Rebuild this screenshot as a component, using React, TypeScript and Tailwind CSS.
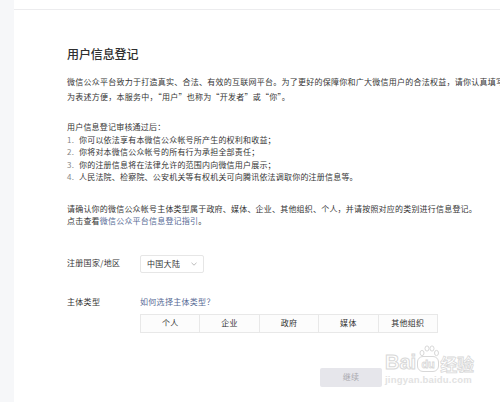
const font = "font-['Noto_Sans_CJK_SC','Noto_Sans',sans-serif]";

const rules = [
    "你可以依法享有本微信公众帐号所产生的权利和收益；",
    "你将对本微信公众帐号的所有行为承担全部责任；",
    "你的注册信息将在法律允许的范围内向微信用户展示；",
    "人民法院、检察院、公安机关等有权机关可向腾讯依法调取你的注册信息等。",
];

const types = ["个人", "企业", "政府", "媒体", "其他组织"];

function Watermark() {
    return (
        <div className="absolute left-[385px] top-[352px] flex flex-col items-start text-[#dcdcdc] select-none">
            <div className="flex items-end leading-none">
                <span className="font-['Liberation_Sans',sans-serif] text-[20px] font-bold text-transparent [-webkit-text-stroke:1px_#d8d8d8]">
                    Bai
                </span>
                <span className="relative mx-[1px] flex h-[16px] w-[22px] items-center justify-center rounded-[6px] border border-[#d8d8d8] font-['Liberation_Sans',sans-serif] text-[11px] font-bold text-transparent [-webkit-text-stroke:0.8px_#d8d8d8]">
                    du
                    <svg className="absolute -top-[12px] left-[1px]" width="20" height="12" viewBox="0 0 20 12" fill="none" stroke="#d8d8d8" strokeWidth="1">
                        <ellipse cx="3" cy="8" rx="2" ry="2.6" />
                        <ellipse cx="8" cy="3.5" rx="2" ry="2.6" />
                        <ellipse cx="13" cy="3.5" rx="2" ry="2.6" />
                        <ellipse cx="17.5" cy="8" rx="2" ry="2.6" />
                    </svg>
                </span>
                <span className={`${font} text-[17px] font-bold text-transparent [-webkit-text-stroke:0.8px_#d8d8d8]`}>经验</span>
            </div>
            <span className="mt-[3px] font-['Liberation_Sans',sans-serif] text-[9.5px] font-bold leading-none tracking-[0.2px] text-[#e2e2e2]">
                jingyan.baidu.com
            </span>
        </div>
    );
}

export default function App() {
    return (
        <div className={`relative flex h-[402px] w-[500px] overflow-hidden bg-white ${font} text-[#353535]`}>
            <div className="w-[14px] shrink-0 bg-[#f6f7f9]" />
            <div className="flex-1 pt-[9px]">
                <div className="border-t border-[#ececee] pl-[53px] pt-[36px]">
                    <h1 className="text-[12px] font-medium leading-[16px] tracking-[-0.1px] text-[#2f2f2f]">用户信息登记</h1>

                    <div className="mt-[12px] whitespace-nowrap text-[8px] leading-[15px] tracking-[0.25px]">
                        <p>微信公众平台致力于打造真实、合法、有效的互联网平台。为了更好的保障你和广大微信用户的合法权益，请你认真填写</p>
                        <p>为表述方便，本服务中，“用户”也称为“开发者”或“你”。</p>
                    </div>

                    <div className="mt-[17px] whitespace-nowrap text-[8px] leading-[12.5px] tracking-[0.2px]">
                        <p>用户信息登记审核通过后：</p>
                        {rules.map((r, i) => (
                            <p key={i} className="flex">
                                <span className="w-[12px] text-[#888]">{i + 1}.</span>
                                <span>{r}</span>
                            </p>
                        ))}
                    </div>

                    <div className="mt-[19px] whitespace-nowrap text-[8px] leading-[12px] tracking-[0.2px]">
                        <p>请确认你的微信公众帐号主体类型属于政府、媒体、企业、其他组织、个人，并请按照对应的类别进行信息登记。</p>
                        <p>
                            点击查看<span className="text-[#576b95]">微信公众平台信息登记指引</span>。
                        </p>
                    </div>

                    <div className="mt-[28px] flex text-[8px]">
                        <span className="w-[73px] pt-[1px] leading-[14px] tracking-[0.3px]">注册国家/地区</span>
                        <div className="flex h-[18px] w-[64px] items-center justify-between rounded-[2px] border border-[#e6e6e6] pl-[6px] pr-[6px]">
                            <span className="tracking-[0.3px] text-[#333]">中国大陆</span>
                            <svg width="6" height="4" viewBox="0 0 6 4" fill="none" stroke="#aaa" strokeWidth="0.8">
                                <path d="M0.5 0.8 L3 3.2 L5.5 0.8" />
                            </svg>
                        </div>
                    </div>

                    <div className="mt-[23px] flex text-[8px] leading-[12px]">
                        <span className="w-[73px] tracking-[0.3px]">主体类型</span>
                        <div className="flex flex-col">
                            <span className="tracking-[0.3px] text-[#576b95]">如何选择主体类型？</span>
                            <div className="mt-[6px] flex h-[19px] w-[298px] border border-[#e8e8e8] bg-[#fcfcfc]">
                                {types.map((t, i) => (
                                    <div
                                        key={t}
                                        className={`flex flex-1 items-center justify-center tracking-[0.3px] text-[#333] ${i > 0 ? "border-l border-[#e8e8e8]" : ""}`}
                                    >
                                        {t}
                                    </div>
                                ))}
                            </div>
                        </div>
                    </div>

                    <div className="mt-[35px] pl-[253px]">
                        <button className="flex h-[19px] w-[62px] items-center justify-center rounded-[2px] bg-[#e6e6eb] text-[8px] tracking-[0.3px] text-[#a8a8ad]">
                            继续
                        </button>
                    </div>
                </div>
            </div>
            <Watermark />
        </div>
    );
}
